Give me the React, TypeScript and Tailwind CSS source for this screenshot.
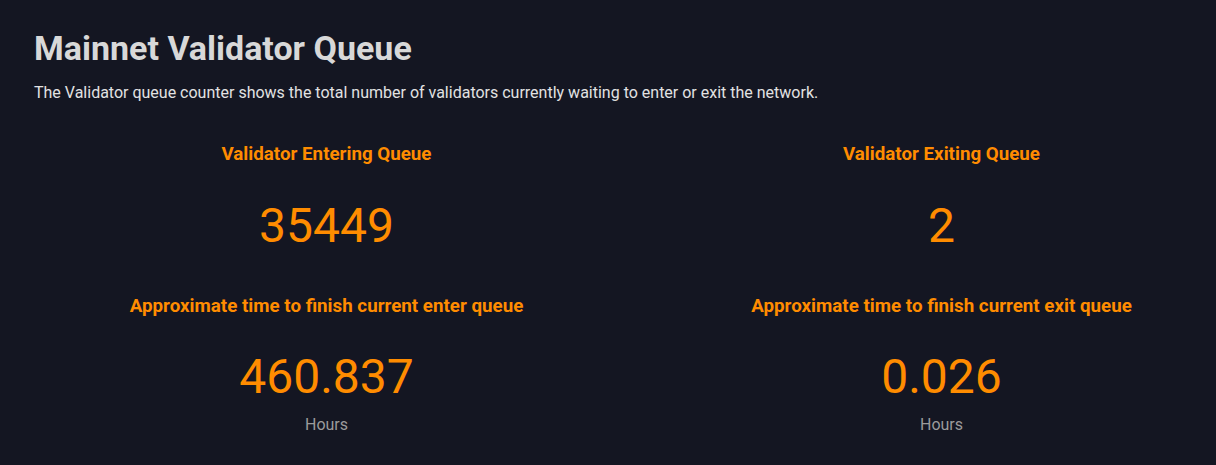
import React from "react";

function Column({
  title1,
  value1,
  title2,
  value2,
}: {
  title1: string;
  value1: string;
  title2: string;
  value2: string;
}) {
  return (
    <div className="w-[615px] shrink-0 flex flex-col items-center text-center">
      <div className="text-[18.75px] leading-[28px] font-bold text-[#ff8c00]">{title1}</div>
      <div className="mt-[34px] text-[48px] leading-[48px] text-[#ff8c00]">{value1}</div>
      <div className="mt-[42px] text-[18.75px] leading-[28px] font-bold text-[#ff8c00]">{title2}</div>
      <div className="mt-[33px] text-[48px] leading-[48px] text-[#ff8c00]">{value2}</div>
      <div className="mt-[12px] text-[16px] leading-[24px] text-[#9b9b9b]">Hours</div>
    </div>
  );
}

export default function App() {
  return (
    <div
      className="w-[1216px] h-[465px] overflow-hidden bg-[#141622]"
      style={{ fontFamily: "Roboto, 'Liberation Sans', sans-serif" }}
    >
      <div className="pt-[28px] pl-[34px]">
        <h1 className="text-[34px] leading-[40px] font-bold text-[#d8d8d8]">Mainnet Validator Queue</h1>
        <p className="mt-[13px] text-[16px] leading-[24px] text-[#e2e2e2]">
          The Validator queue counter shows the total number of validators currently waiting to enter or exit the network.
        </p>
      </div>
      <div className="mt-[35px] flex pl-[19px]">
        <Column
          title1="Validator Entering Queue"
          value1="35449"
          title2="Approximate time to finish current enter queue"
          value2="460.837"
        />
        <Column
          title1="Validator Exiting Queue"
          value1="2"
          title2="Approximate time to finish current exit queue"
          value2="0.026"
        />
      </div>
    </div>
  );
}
